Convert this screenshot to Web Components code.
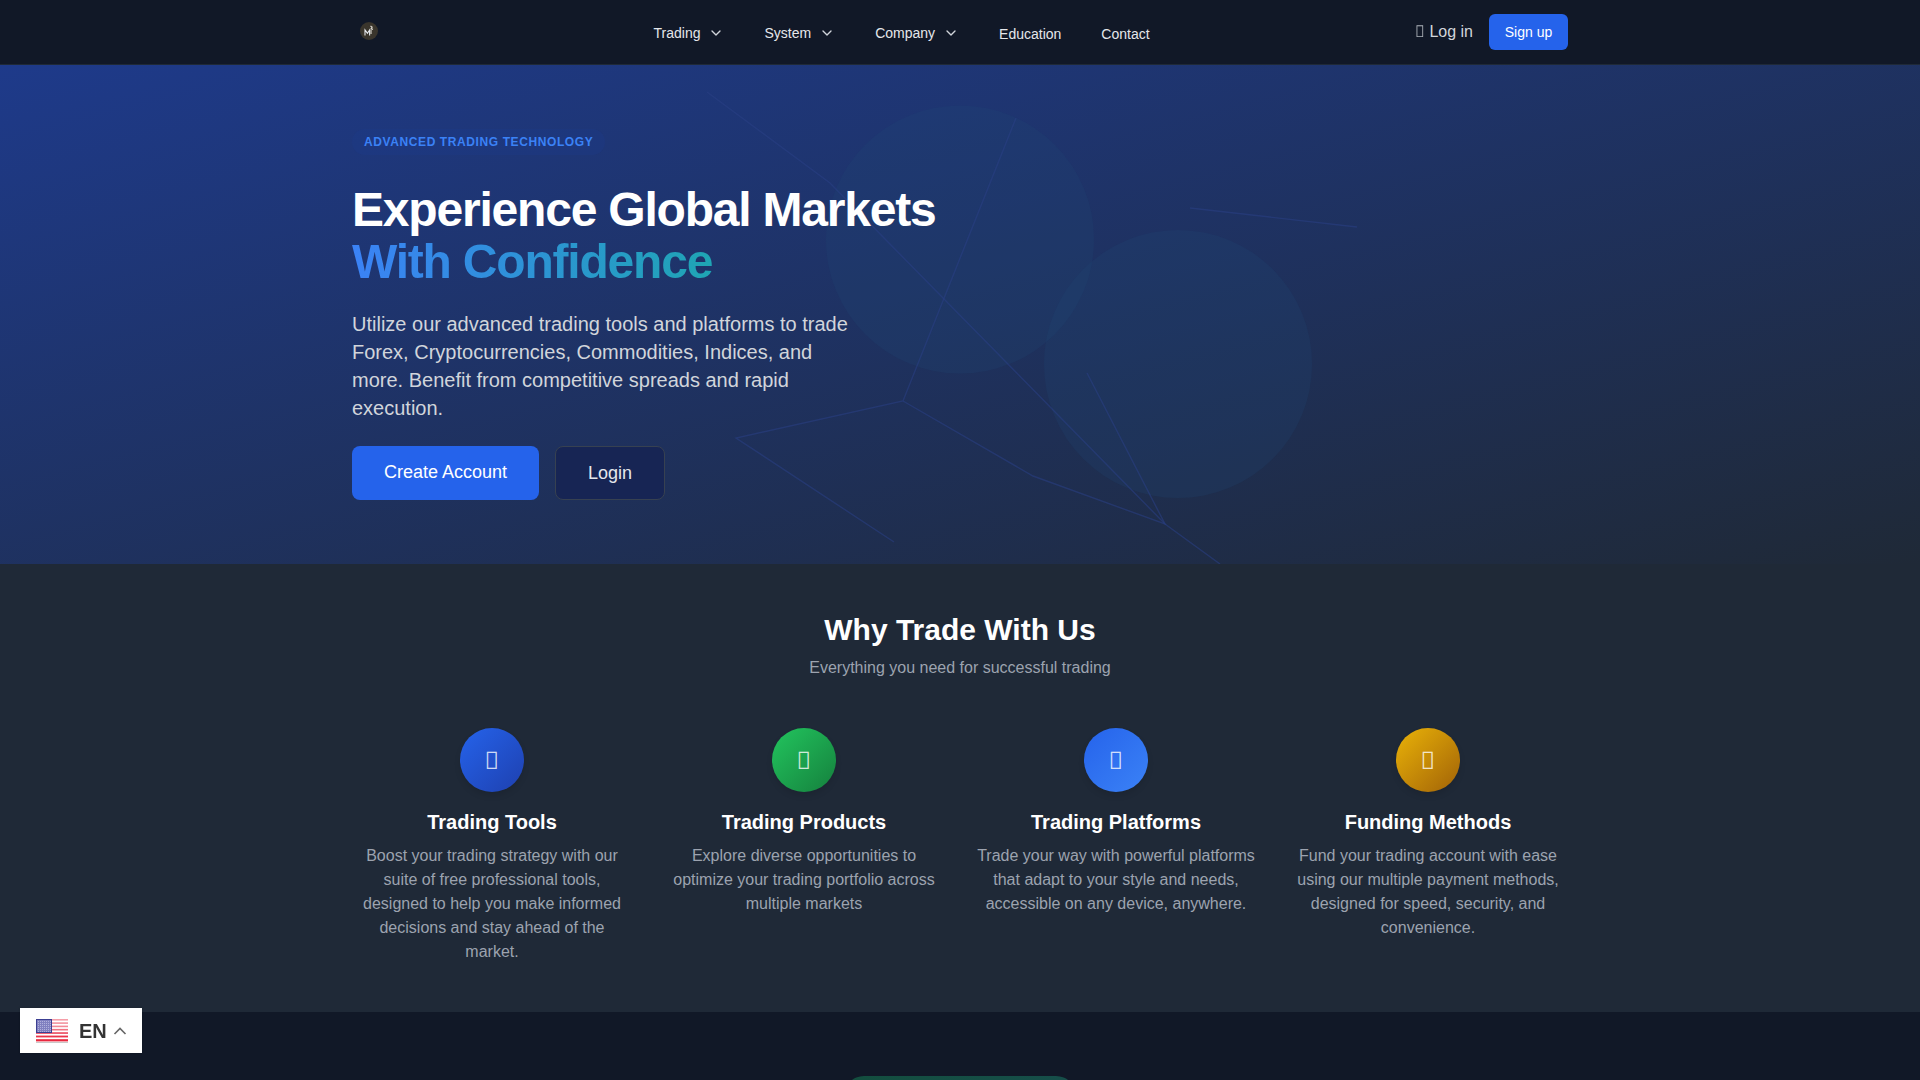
<!DOCTYPE html>
<html lang="en">
<head>
<meta charset="utf-8">
<title>Trading</title>
<style>
html,body{margin:0;padding:0;height:1080px;overflow:hidden;background:#111827;font-family:"Liberation Sans",Arial,sans-serif;}
</style>
</head>
<body>
<site-nav>
  <nav-link caret>Trading</nav-link>
  <nav-link caret>System</nav-link>
  <nav-link caret>Company</nav-link>
  <nav-link low>Education</nav-link>
  <nav-link low>Contact</nav-link>
</site-nav>
<hero-section></hero-section>
<why-section>
  <feature-card c1="#2563eb" c2="#1e40af" icon="&#xf201;" heading="Trading Tools">Boost your trading strategy with our suite of free professional tools, designed to help you make informed decisions and stay ahead of the market.</feature-card>
  <feature-card c1="#22c55e" c2="#15803d" icon="&#xf201;" heading="Trading Products">Explore diverse opportunities to optimize your trading portfolio across multiple markets</feature-card>
  <feature-card c1="#2563eb" c2="#3b82f6" icon="&#xf201;" heading="Trading Platforms">Trade your way with powerful platforms that adapt to your style and needs, accessible on any device, anywhere.</feature-card>
  <feature-card c1="#eab308" c2="#a16207" icon="&#xf201;" heading="Funding Methods">Fund your trading account with ease using our multiple payment methods, designed for speed, security, and convenience.</feature-card>
</why-section>
<next-section></next-section>
<lang-switcher></lang-switcher>

<script>
function el(name, html){
  customElements.define(name, class extends HTMLElement{
    constructor(){super();const t=document.createElement('template');
      t.innerHTML=typeof html==='function'?html(this):html;
      this.attachShadow({mode:'open'}).appendChild(t.content.cloneNode(true));}
    connectedCallback(){
      if(typeof html==='function'){this.shadowRoot.innerHTML=html(this);}
    }
  });
}
el('site-nav',`<style>
:host{display:block;background:#111827;border-bottom:1px solid #1f2937;height:64px;box-sizing:content-box}
.in{width:1216px;height:64px;margin:0 auto;display:flex;align-items:center}
.logo{width:18px;height:18px;margin:0 0 0 8px;display:block;position:relative;top:-1px}
.links{display:flex;gap:40px;margin-left:275.5px;align-items:center;padding-top:2px}
.right{margin-left:auto;display:flex;align-items:center;gap:16px}
.login{font-size:16px;line-height:24px;color:#d1d5db}
.ico{font-family:"Noto Sans",sans-serif;line-height:0;opacity:.8}
.signup{display:flex;align-items:center;justify-content:center;width:79px;height:36px;background:#2563eb;color:#fff;font-size:14px;border-radius:6px}
</style>
<div class="in">
<svg class="logo" viewBox="0 0 18 18"><circle cx="9" cy="9" r="9" fill="#3a352c"/><path d="M5 13.5V8l2.4 3.2L9.6 8v5.5" fill="none" stroke="#e5e7eb" stroke-width="1.1"/><path d="M10.5 4l1.6 1.2-1 1.6 1.9.6M11 8v4" fill="none" stroke="#d6d3cb" stroke-width="1.2"/></svg>
<div class="links"><slot></slot></div>
<div class="right"><span class="login"><span class="ico">&#xf2f6;</span> Log in</span><span class="signup">Sign up</span></div>
</div>`);
el('nav-link',h=>`<style>
:host{display:flex;align-items:center;font-size:14px;color:#e5e7eb;line-height:20px}
.t{position:relative;top:${h.hasAttribute('low')?'1px':'0'}}
svg{width:16px;height:16px;margin-left:8px;display:block}
</style><span class="t"><slot></slot></span>${h.hasAttribute('caret')?'<svg viewBox="0 0 24 24" fill="none" stroke="#d1d5db" stroke-width="2" stroke-linecap="round" stroke-linejoin="round"><path d="M6 9l6 6 6-6"/></svg>':''}`);
el('hero-section',`<style>
:host{display:block;position:relative;height:499px;box-sizing:border-box;padding:64px 0;overflow:hidden;background:linear-gradient(to bottom right,#1e3a8a,#1f2937)}
.deco{position:absolute;left:0;top:-65px;width:1920px;height:1080px;pointer-events:none}
.in{position:relative;width:1216px;margin:0 auto}
.badge{display:inline-block;font-size:12px;line-height:16px;font-weight:700;letter-spacing:.6px;color:#3b82f6;padding:5px 12px;border-radius:13px;background:rgba(30,58,138,.3)}
h1{margin:29px 0 0;font-size:48px;line-height:52px;font-weight:700;letter-spacing:-1.2px;color:#fff}
h1 span{display:block;width:max-content;background:linear-gradient(90deg,#3b82f6,#1fa5b4);-webkit-background-clip:text;background-clip:text;color:transparent}
p{margin:22px 0 0;font-size:20px;line-height:28px;color:#d1d5db;width:512px}
.btns{display:flex;gap:16px;margin-top:24px}
.b{display:flex;align-items:center;justify-content:center;height:54px;box-sizing:border-box;font-size:18px;border-radius:8px}
.p{width:187px;background:#2563eb;color:#fff;padding-bottom:2px}
.s{width:110px;background:#172554;color:#e5e7eb;border:1px solid #374151}
</style>
<svg class="deco" viewBox="0 0 1920 1080" fill="none">
<circle cx="960" cy="239.5" r="134" fill="#1e4a78" fill-opacity=".22"/>
<circle cx="1178" cy="364" r="134" fill="#1e4a78" fill-opacity=".22"/>
<g stroke="#2a3f85" stroke-opacity=".55" stroke-width="1.4">
<path d="M707 92L830 183L943 298L1165 524L1220 564"/>
<path d="M1016 118L903 401L736 438L894 542"/>
<path d="M903 401L1033 476L1165 524L1087 373"/>
<path d="M1190 208L1357 227"/>
</g></svg>
<div class="in">
<span class="badge">ADVANCED TRADING TECHNOLOGY</span>
<h1>Experience Global Markets<span>With Confidence</span></h1>
<p>Utilize our advanced trading tools and platforms to trade Forex, Cryptocurrencies, Commodities, Indices, and more. Benefit from competitive spreads and rapid execution.</p>
<div class="btns"><span class="b p">Create Account</span><span class="b s">Login</span></div>
</div>`);
el('why-section',`<style>
:host{display:block;height:448px;box-sizing:border-box;background:#1f2937;padding-top:48px}
.in{width:1216px;margin:0 auto}
h2{margin:0;text-align:center;font-size:30px;line-height:36px;font-weight:700;color:#fff}
.sub{margin:8px 0 0;text-align:center;font-size:16px;line-height:24px;color:#9ca3af}
.grid{display:grid;grid-template-columns:repeat(4,280px);gap:32px;margin-top:48px}
</style><div class="in"><h2>Why Trade With Us</h2><p class="sub">Everything you need for successful trading</p><div class="grid"><slot></slot></div></div>`);
el('feature-card',h=>`<style>
:host{display:block;text-align:center}
.ic{width:64px;height:64px;border-radius:50%;margin:0 auto 16px;display:flex;align-items:center;justify-content:center;background:linear-gradient(135deg,${h.getAttribute('c1')},${h.getAttribute('c2')});box-shadow:0 4px 6px rgba(0,0,0,.1);color:rgba(255,255,255,.8);font-size:24px;line-height:1;font-family:"Noto Sans",sans-serif}
h3{margin:0 0 8px;font-size:20px;line-height:28px;font-weight:700;color:#fff}
p{margin:0;font-size:16px;line-height:24px;color:#9ca3af}
</style><div class="ic">${h.getAttribute('icon')}</div><h3>${h.getAttribute('heading')}</h3><p><slot></slot></p>`);
el('next-section',`<style>
:host{display:block;height:68px;background:#111827;padding-top:64px;box-sizing:border-box;overflow:hidden}
.pill{width:232px;height:40px;margin:0 auto;border-radius:20px;background:linear-gradient(90deg,#134e3e,#164e4a)}
</style><div class="pill"></div>`);
el('lang-switcher',`<style>
:host{position:fixed;left:20px;top:1008px;width:122px;height:45px;background:#fff;display:flex;align-items:center;box-shadow:0 0 2px rgba(0,0,0,.2);font-family:"Liberation Sans",sans-serif}
svg.f{width:32px;height:24px;margin-left:16px;display:block}
.t{margin-left:11px;font-size:20px;font-weight:700;color:#333;line-height:1}
svg.c{width:14px;height:8px;margin-left:6px;display:block}
</style>
<svg class="f" viewBox="0 0 32 24">
<defs><pattern id="d" width="2" height="2" patternUnits="userSpaceOnUse"><rect width="2" height="2" fill="#8080c0"/><rect width="1" height="1" fill="#b0b0dc"/></pattern></defs>
<rect width="32" height="23" fill="#fff"/>
<g fill="#e8283f">
<rect y="0" width="32" height="1.6" fill-opacity=".45"/><rect y="3.3" width="32" height="1.6" fill-opacity=".5"/><rect y="6.6" width="32" height="1.6" fill-opacity=".55"/><rect y="9.9" width="32" height="1.6" fill-opacity=".65"/><rect y="13.2" width="32" height="1.7" fill-opacity=".8"/><rect y="16.6" width="32" height="1.8" fill-opacity=".95"/><rect y="20.2" width="32" height="2.2"/>
</g>
<rect y="23" width="32" height="1" fill="#c9c9c9"/>
<rect x=".5" y=".5" width="15" height="13" fill="url(#d)" stroke="#3c3f92"/>
</svg>
<span class="t">EN</span>
<svg class="c" viewBox="0 0 14 8" fill="none" stroke="#666" stroke-width="1.6"><path d="M1.5 7L7 1.5 12.5 7"/></svg>`);
</script>
</body>
</html>
